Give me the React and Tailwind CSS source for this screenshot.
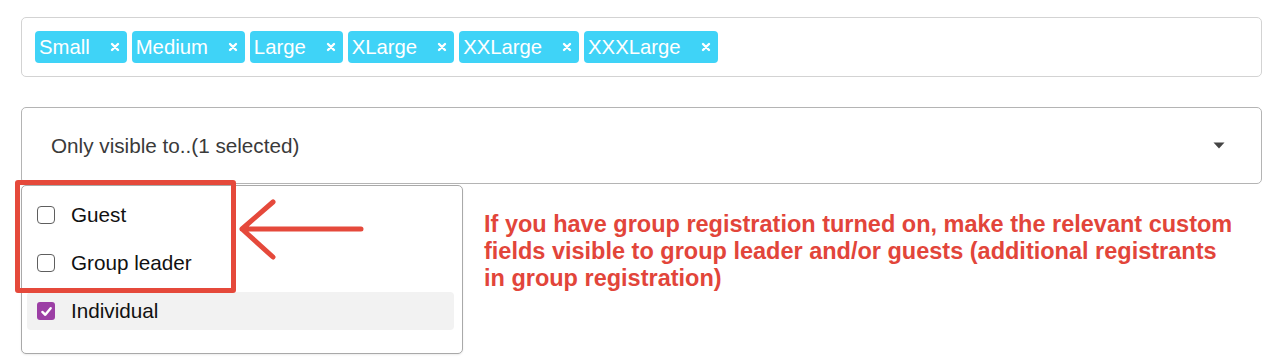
import React from "react";

const tags = ["Small", "Medium", "Large", "XLarge", "XXLarge", "XXXLarge"];

const options = [
    { label: "Guest", checked: false },
    { label: "Group leader", checked: false },
    { label: "Individual", checked: true },
];

function Tag({ label }) {
    return (
        <div className="flex items-center h-[32px] rounded-[4px] bg-[#3fd3f7] pl-[4px] pr-[7px] text-white text-[20.3px] leading-none">
            <span>{label}</span>
            <svg className="ml-[20px]" width="10" height="10" viewBox="0 0 10 10">
                <path d="M2 2 L8 8 M8 2 L2 8" stroke="white" strokeWidth="2.4" strokeLinecap="round" />
            </svg>
        </div>
    );
}

function Checkbox({ checked }) {
    if (checked) {
        return (
            <div className="w-[18px] h-[18px] rounded-[3px] bg-[#9c3fa5] flex items-center justify-center">
                <svg width="13" height="13" viewBox="0 0 14 14">
                    <path d="M2.5 7.5 L5.7 10.5 L11.5 3.5" fill="none" stroke="white" strokeWidth="2.6" strokeLinecap="round" strokeLinejoin="round" />
                </svg>
            </div>
        );
    }
    return <div className="w-[18px] h-[18px] rounded-[4px] border border-[#5f5f5f] bg-white" />;
}

export default function App() {
    return (
        <div
            className="relative bg-white w-[1280px] h-[362px] pl-[21px] pr-[18px] pt-[17px]"
            style={{ fontFamily: '"Liberation Sans", Helvetica, Arial, sans-serif' }}
        >
            {/* Tag input */}
            <div className="h-[60px] rounded-[5px] border border-[#d3d3d3] flex items-center gap-[5px] pl-[13px]">
                {tags.map((t) => (
                    <Tag key={t} label={t} />
                ))}
            </div>

            {/* Select */}
            <div className="mt-[30px] h-[77px] rounded-[5px] border border-[#b4b4b4] flex items-center justify-between pl-[29px] pr-[36px]">
                <span className="text-[20.7px] text-[#3a3a3a]">Only visible to..(1 selected)</span>
                <svg width="12" height="7" viewBox="0 0 12 7">
                    <path d="M0.5 0.5 L11.5 0.5 L6 6.5 Z" fill="#444" />
                </svg>
            </div>

            <div className="flex items-start mt-[1px]">
                {/* Dropdown panel */}
                <div className="w-[442px] h-[169px] rounded-[5px] border border-[#a9a9a9] bg-white pt-[10px] pl-[5px] pr-[8px] flex flex-col gap-[10px] shadow-[0_1px_2px_rgba(0,0,0,0.08)]">
                    {options.map((o) => (
                        <div
                            key={o.label}
                            className={`h-[38px] rounded-[4px] flex items-center pl-[10px] gap-[16px] text-[20.7px] text-[#111] ${o.checked ? "bg-[#f2f2f2]" : ""}`}
                        >
                            <Checkbox checked={o.checked} />
                            <span>{o.label}</span>
                        </div>
                    ))}
                </div>

                {/* Annotation note */}
                <p className="ml-[21px] mt-[26px] text-[23.5px] leading-[27px] font-bold text-[#e2453a]">
                    If you have group registration turned on, make the relevant custom
                    <br />
                    fields visible to group leader and/or guests (additional registrants
                    <br />
                    in group registration)
                </p>
            </div>

            {/* Red highlight box */}
            <div className="absolute left-[15px] top-[180px] w-[221px] h-[113px] border-[5px] border-[#e5493b] rounded-[3px]" />

            {/* Arrow */}
            <svg className="absolute left-[230px] top-[192px]" width="145" height="76" viewBox="0 0 145 76">
                <path
                    d="M131 37 L12 37 M43 10 L12 37 L43 65"
                    fill="none"
                    stroke="#e5493b"
                    strokeWidth="5"
                    strokeLinecap="round"
                    strokeLinejoin="round"
                />
            </svg>
        </div>
    );
}
